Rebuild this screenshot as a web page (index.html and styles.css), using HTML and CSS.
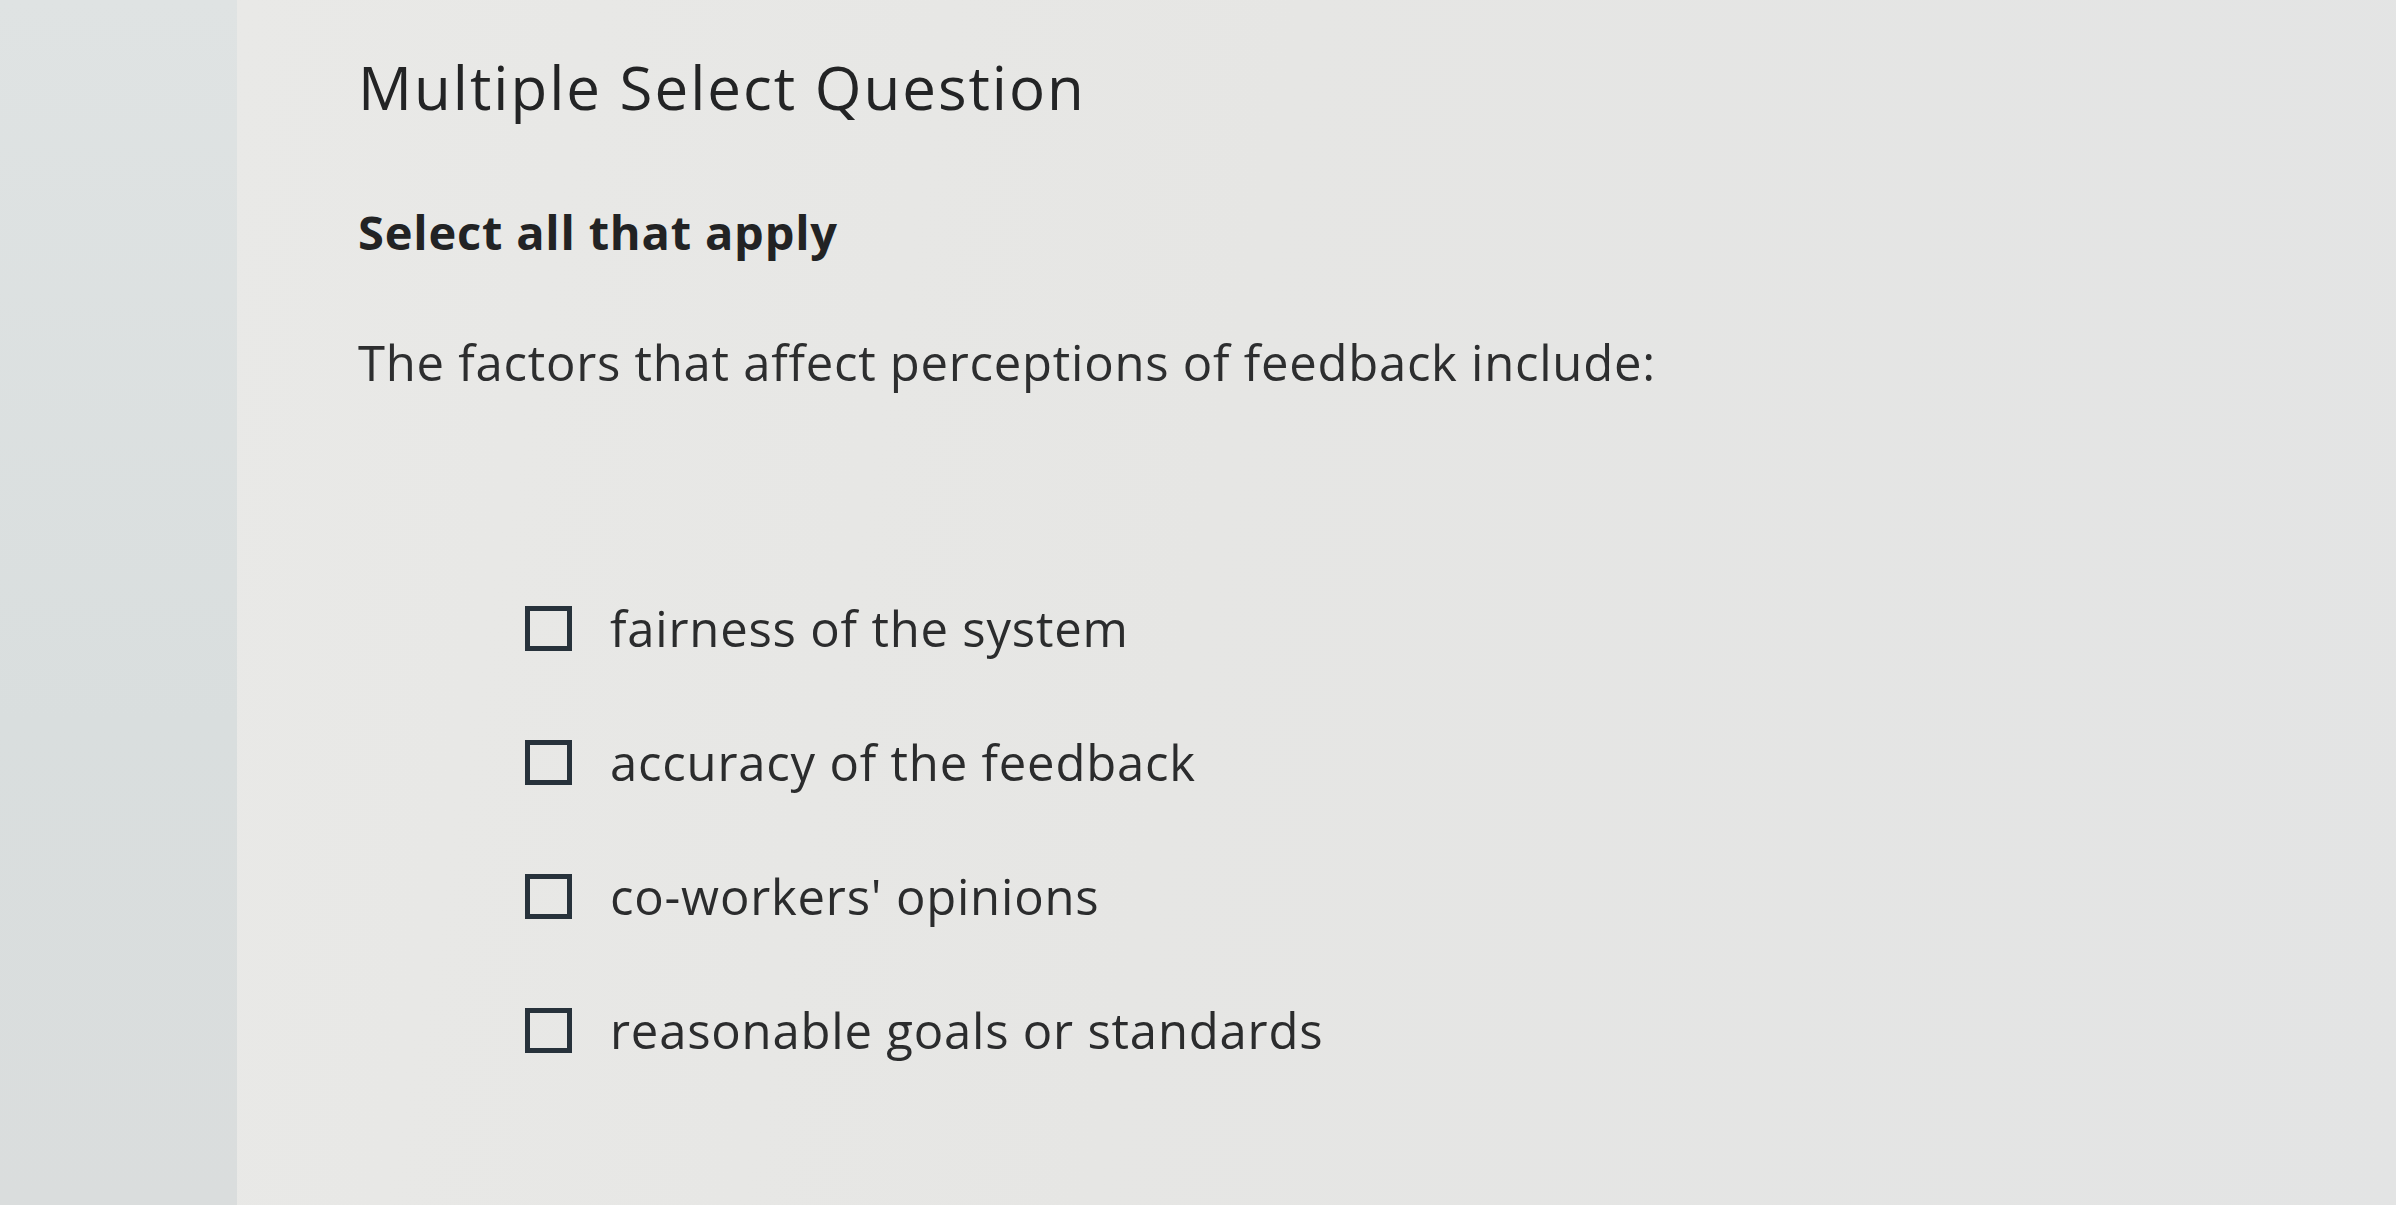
FILE: index.html
```html
<!DOCTYPE html>
<html lang="en">
  <head>
    <meta charset="UTF-8" />
    <meta name="viewport" content="width=device-width, initial-scale=1.0" />
    <title>Multiple Select Question</title>
    <link rel="stylesheet" href="styles.css">
  </head>
  <body>
    <div class="page">
      <div class="rail"></div>
      <main class="question">
        <h1 class="q-type">Multiple Select Question</h1>
        <p class="q-hint">Select all that apply</p>
        <p class="q-prompt">The factors that affect perceptions of feedback include:</p>

        <ul class="choices">
          <li class="choice">
            <span class="box"></span>
            <span class="label">fairness of the system</span>
          </li>
          <li class="choice">
            <span class="box"></span>
            <span class="label">accuracy of the feedback</span>
          </li>
          <li class="choice">
            <span class="box"></span>
            <span class="label">co-workers' opinions</span>
          </li>
          <li class="choice">
            <span class="box"></span>
            <span class="label">reasonable goals or standards</span>
          </li>
        </ul>
      </main>
    </div>
  </body>
</html>
```

FILE: styles.css
```css
html,
body {
  margin: 0;
  height: 100%;
}
body {
  font-family: "Open Sans", "Liberation Sans", sans-serif;
  color: #2b2b2b;
  background: #e4e5e4;
  overflow: hidden;
}
.page {
  display: flex;
  height: 100%;
}
.rail {
  width: 237px;
  flex: none;
  background: linear-gradient(180deg, #dfe3e3 0%, #d9dede 60%, #dadddd 100%);
}
.question {
  flex: 1;
  padding: 0 0 0 121px;
  background: linear-gradient(100deg, #e9e9e7 0%, #e6e6e4 45%, #e3e4e4 100%);
}
.q-type {
  margin: 0;
  padding-top: 52px;
  font-size: 60px;
  font-weight: 400;
  letter-spacing: 2px;
  line-height: 70px;
  color: #232425;
}
.q-hint {
  margin: 0;
  padding-top: 80px;
  font-size: 47px;
  font-weight: 700;
  letter-spacing: 0.8px;
  line-height: 60px;
  color: #222324;
}
.q-prompt {
  margin: 0;
  padding-top: 70px;
  font-size: 49px;
  letter-spacing: 0.75px;
  line-height: 60px;
  color: #2d2e2f;
}
.choices {
  list-style: none;
  margin: 0;
  padding: 206px 0 0 167px;
  display: flex;
  flex-direction: column;
  gap: 74px;
}
.choice {
  display: flex;
  align-items: center;
  gap: 38px;
  height: 60px;
}
.box {
  width: 37px;
  height: 35px;
  border: 5px solid #27323b;
  flex: none;
}
.label {
  font-size: 49px;
  letter-spacing: 0.8px;
  line-height: 60px;
  color: #2b2c2d;
}
```
